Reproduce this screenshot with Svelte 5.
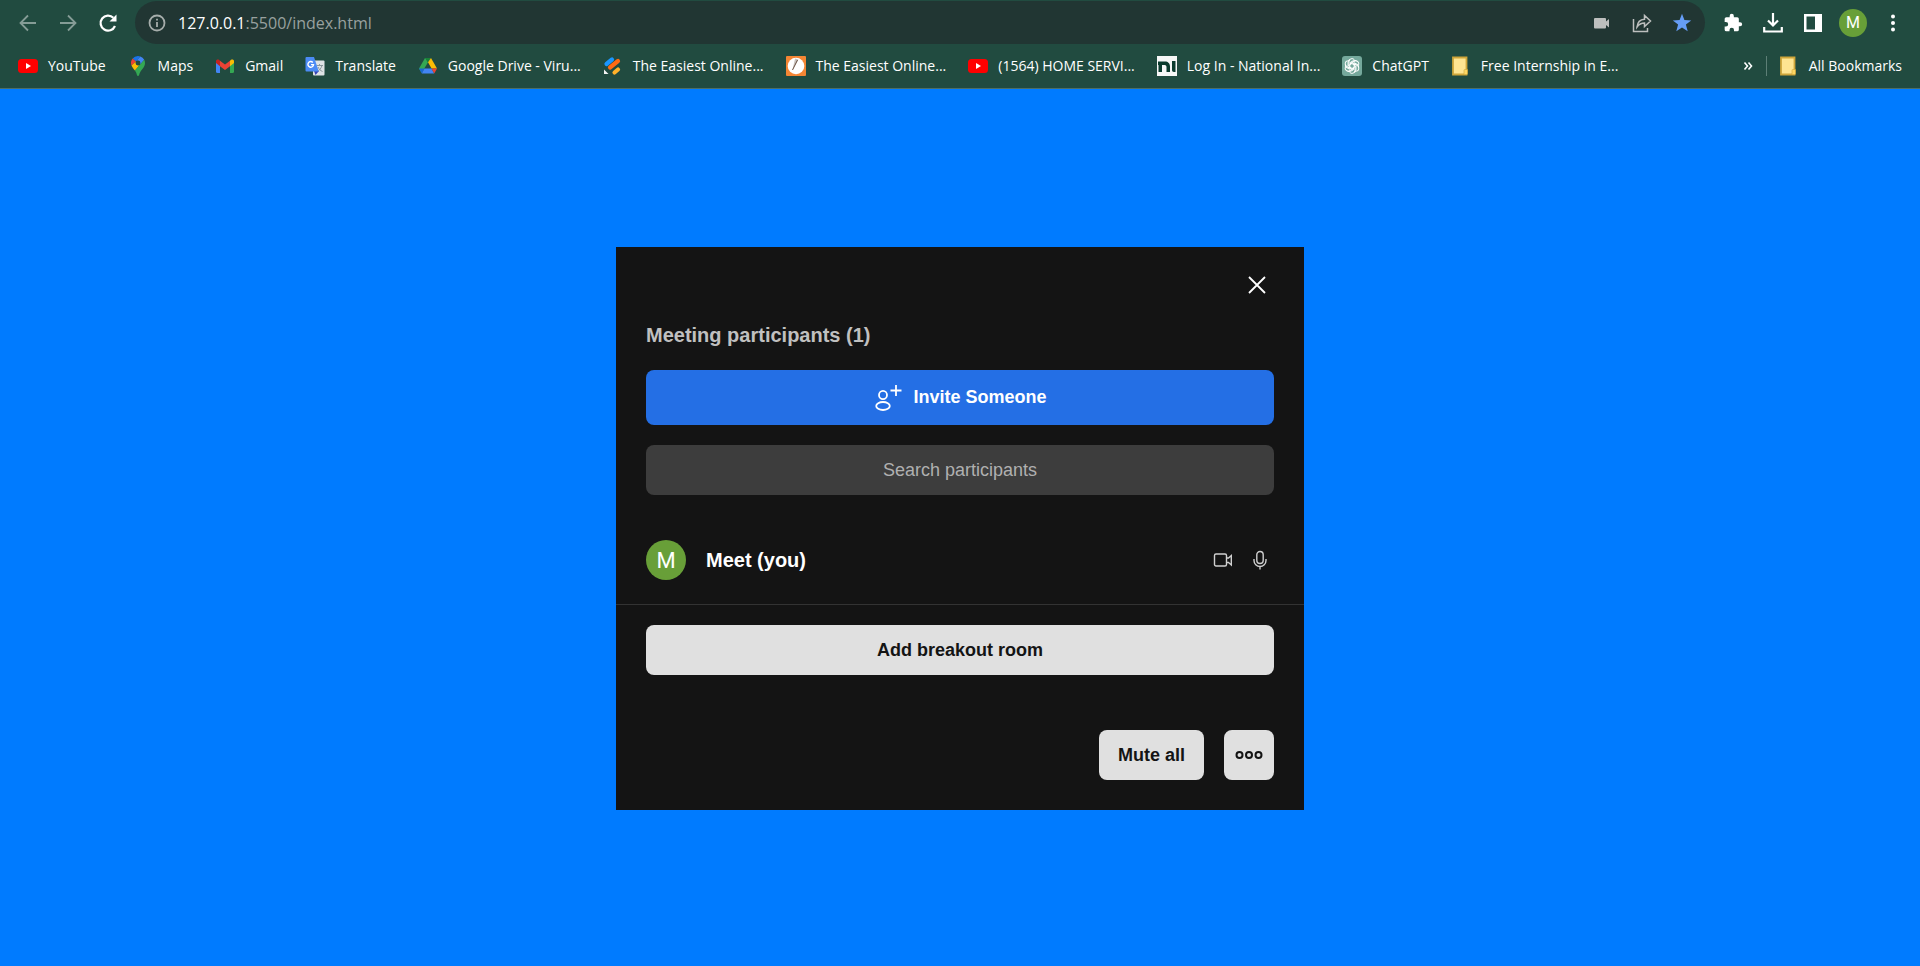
<script>
  const bookmarks = [
    { icon: 'youtube', label: 'YouTube' },
    { icon: 'maps', label: 'Maps' },
    { icon: 'gmail', label: 'Gmail' },
    { icon: 'translate', label: 'Translate' },
    { icon: 'drive', label: 'Google Drive - Viru...' },
    { icon: 'stripes', label: 'The Easiest Online...' },
    { icon: 'pen', label: 'The Easiest Online...' },
    { icon: 'youtube', label: '(1564) HOME SERVI...' },
    { icon: 'ni', label: 'Log In - National In...' },
    { icon: 'chatgpt', label: 'ChatGPT' },
    { icon: 'folder', label: 'Free Internship in E...' }
  ];
  const petals = [0, 60, 120, 180, 240, 300];
</script>

{#snippet favicon(name)}
  <svg class="favicon" viewBox="0 0 20 20" aria-hidden="true">
    {#if name === 'youtube'}
      <rect x="0" y="3" width="20" height="14" rx="3.5" fill="#f00" />
      <path d="M8 7l5 3-5 3z" fill="#fff" />
    {:else if name === 'maps'}
      <path d="M10 0a7 7 0 0 0-5.4 2.5L8 5.400 12.300.4A7 7 0 0 0 10 0z" fill="#1a73e8" />
      <path d="M4.600 2.500A7 7 0 0 0 3.500 9.500L8 5.400z" fill="#ea4335" />
      <path d="M12.300.4 8 5.400a2.700 2.700 0 0 1 4 3.300L16.200 3.800A7 7 0 0 0 12.300.4z" fill="#4285f4" />
      <path d="M8 5.400 3.500 9.500c.8 1.900 2 3.100 3.400 5L12 8.700a2.700 2.700 0 0 1-4-3.300z" fill="#fbbc04" />
      <path d="M16.200 3.800 6.900 14.500c1.200 1.700 1.700 3 2.100 4.700.3 1 1.700 1 2 0 1.200-5.200 6-7.300 6-12.200a7 7 0 0 0-.8-3.200z" fill="#34a853" />
      <circle cx="10" cy="7" r="2.400" fill="#214b40" />
    {:else if name === 'gmail'}
      <path d="M1 6v9.500A1.500 1.500 0 0 0 2.500 17H5V9z" fill="#4285f4" />
      <path d="M19 6v9.500a1.500 1.500 0 0 1-1.500 1.500H15V9z" fill="#34a853" />
      <path d="M1 5v2l4 3.200V4.700L4 3.800C2.800 2.900 1 3.500 1 5z" fill="#c5221f" />
      <path d="M19 5v2l-4 3.200V4.700l1-.9c1.200-.9 3-.3 3 1.200z" fill="#fbbc04" />
      <path d="M5 4.700v5.500l5 3.900 5-3.900V4.700l-5 3.900z" fill="#ea4335" />
    {:else if name === 'translate'}
      <rect x="8" y="4.500" width="11.500" height="15" rx="1" fill="#dfe3e5" />
      <path d="M11.500 9.500h6.500M14.500 8v1.500M17 9.500c-.8 2.800-2.500 4.800-4.500 6M13 11c1 2.200 2.500 3.600 4.500 4.500" fill="none" stroke="#8a979c" stroke-width="1" />
      <path d="M9 15h5l-3.500 4z" fill="#3743b5" />
      <path d="M1.500 1H9l4.800 14.500H1.500A1 1 0 0 1 .5 14.500V2a1 1 0 0 1 1-1z" fill="#4b8bf5" />
      <path d="M7.800 6.500A2.800 2.800 0 1 0 8.500 8.600H6" fill="none" stroke="#fff" stroke-width="1.400" />
    {:else if name === 'drive'}
      <path d="M7 2 1 12.500 3.700 17 10 6.200 7.600 2z" fill="#34a853" />
      <path d="M7 2h6l-3 4.400z" fill="#188038" />
      <path d="M13 2 10 6.300 13.500 12.500H19z" fill="#fbbc04" />
      <path d="M1 12.500h5.500L3.800 17.400z" fill="#1967d2" />
      <path d="M6.500 12.500h7l2.700 5H3.800z" fill="#4285f4" />
      <path d="M13.500 12.500H19l-2.800 5z" fill="#ea4335" />
    {:else if name === 'stripes'}
      <g stroke-width="4.200" stroke-linecap="round">
        <path d="M3.500 8l5.500-4.500" stroke="#1b96ff" />
        <path d="M7 11.500l8-6.500" stroke="#ff6a13" />
        <path d="M11.500 16.500l3.500-3" stroke="#ffb12a" />
      </g>
      <path d="M1 18v-4.500L5.500 18z" fill="#f4f4f4" />
    {:else if name === 'pen'}
      <rect width="20" height="20" rx="1" fill="#f58634" />
      <circle cx="10" cy="10" r="8.300" fill="#fff" />
      <path d="M9 2.500 6.500 14l6-10.500" fill="#c9c3bf" />
      <path d="M11.500 4 6.500 14" stroke="#6c5244" stroke-width="1" />
    {:else if name === 'ni'}
      <rect width="20" height="20" fill="#f7f7f7" />
      <path d="M1 5.500h7c3 0 5 2 5 5V16h-3.500v-5c0-1.300-.7-2-1.800-2H5v7H1.500V9H1zM15 5h3.500v11H17c-1.300 0-2-.8-2-2z" fill="#0b3b2e" />
    {:else if name === 'chatgpt'}
      <rect width="20" height="20" rx="3" fill="#75a99c" />
      <g fill="none" stroke="#fff" stroke-width="1" stroke-linejoin="round">
        {#each petals as angle}
          <path d="M10 7.500 7 9.200V5.600a3 3 0 0 1 5.400-1.800" transform="rotate({angle} 10 10)" />
          <path d="M8.500 8.300V6.300L11.300 4.700a3 3 0 0 1 3.300.3" transform="rotate({angle} 10 10)" />
        {/each}
      </g>
    {:else}
      <path d="M2 1.500h13.500v17H2z" fill="#ffe591" stroke="#cfa63a" />
      <path d="M13 18.500v-4.200a.8.8 0 0 1 .8-.8h2.700v4.200a.8.800 0 0 1-.8.800z" fill="#fdd663" stroke="#cfa63a" stroke-width=".6" />
    {/if}
  </svg>
{/snippet}

<div class="window">
  <header>
    <div class="toolbar">
      <nav class="history" aria-label="History">
        <button class="dim" aria-label="Back">
          <svg width="20" height="20" viewBox="0 0 20 20"><path d="M18 10H2.500M10 2.500 2.500 10l7.500 7.500" /></svg>
        </button>
        <button class="dim" aria-label="Forward">
          <svg width="20" height="20" viewBox="0 0 20 20"><path d="M2 10h15.500M10 2.500l7.500 7.500-7.500 7.500" /></svg>
        </button>
        <button aria-label="Reload">
          <svg width="20" height="20" viewBox="0 0 20 20"><path d="M17 13a7.500 7.500 0 1 1-1.600-8.200" stroke-width="2.200" /><path d="M18.500 1.500v7h-7z" fill="#fff" stroke="none" /></svg>
        </button>
      </nav>
      <div class="omnibox">
        <svg class="info" width="18" height="18" viewBox="0 0 18 18" aria-hidden="true">
          <circle cx="9" cy="9" r="7.500" /><path d="M9 8v5M9 4.800v1.800" />
        </svg>
        <a class="address" href="#top"><span>127.0.0.1</span>:5500/index.html</a>
        <button class="gray" aria-label="Camera in use">
          <svg width="20" height="20" viewBox="0 0 20 20"><path d="M3 5h10a1 1 0 0 1 1 1v2.500L17 6v8.500L14 12v2.500a1 1 0 0 1-1 1H3a1 1 0 0 1-1-1V6a1 1 0 0 1 1-1z" fill="#bdbfbe" stroke="none" /></svg>
        </button>
        <button class="gray" aria-label="Share this page">
          <svg width="20" height="20" viewBox="0 0 20 20"><path d="M1.500 6v12.500h14V15M5 14c.5-5 3-7.500 7.500-7.800V2.500L18.500 8l-6 5.500v-3.500C9 10 7 11.200 5 14z" stroke-width="1.500" /></svg>
        </button>
        <button aria-label="Edit bookmark">
          <svg width="20" height="20" viewBox="0 0 20 20"><path d="M10 .8l2.400 6.300 6.800.3-5.300 4.200 1.800 6.600L10 14.500l-5.700 3.700 1.800-6.600L.8 7.400l6.800-.3z" fill="#669df6" stroke="none" /></svg>
        </button>
      </div>
      <div class="actions">
        <button aria-label="Extensions">
          <svg width="20" height="20" viewBox="0 0 24 24"><path d="M20.500 11H19V7a2 2 0 0 0-2-2h-4V3.500a2.500 2.500 0 0 0-5 0V5H4a2 2 0 0 0-2 2v3.800h1.500a2.700 2.700 0 0 1 0 5.400H2V20a2 2 0 0 0 2 2h3.800v-1.500a2.700 2.700 0 0 1 5.400 0V22H17a2 2 0 0 0 2-2v-4h1.500a2.500 2.500 0 0 0 0-5z" fill="#fff" stroke="none" /></svg>
        </button>
        <button aria-label="Downloads">
          <svg width="20" height="20" viewBox="0 0 20 20"><path d="M10 0v12M5 7.500l5 5 5-5M1.200 14v4.500h17.600V14" stroke-width="2.200" /></svg>
        </button>
        <button aria-label="Side panel">
          <svg width="20" height="20" viewBox="0 0 20 20"><path d="M1 1h18v18H1zM3.500 3.500v13H12v-13z" fill="#fff" fill-rule="evenodd" stroke="none" /></svg>
        </button>
        <button class="profile" aria-label="Profile">M</button>
        <button class="menu" aria-label="Menu">
          <svg width="20" height="20" viewBox="0 0 20 20"><g fill="#fff" stroke="none"><circle cx="10" cy="3.500" r="2" /><circle cx="10" cy="10" r="2" /><circle cx="10" cy="16.500" r="2" /></g></svg>
        </button>
      </div>
    </div>
    <nav class="bookmarks" aria-label="Bookmarks">
      {#each bookmarks as bookmark}
        <a href="#top">{@render favicon(bookmark.icon)}{bookmark.label}</a>
      {/each}
      <button class="overflow" aria-label="More bookmarks">
        <svg width="10" height="10" viewBox="0 0 10 10"><path d="M1.500 1.500 4.500 5 1.500 8.500M5.500 1.500 8.500 5 5.500 8.500" stroke-width="1.600" /></svg>
      </button>
      <a class="all" href="#top">{@render favicon('folder')}All Bookmarks</a>
    </nav>
  </header>

  <main>
    <section class="panel" aria-labelledby="panel-title">
      <button class="close" aria-label="Close">
        <svg width="20" height="20" viewBox="0 0 20 20"><path d="M2 2l16 16M18 2 2 18" stroke-width="1.800" /></svg>
      </button>
      <h1 id="panel-title">Meeting participants (1)</h1>
      <button class="wide invite">
        <svg width="30" height="30" viewBox="0 0 30 30" aria-hidden="true"><ellipse cx="10" cy="12" rx="4" ry="4.200" /><ellipse cx="10" cy="23" rx="6.800" ry="4" /><path d="M23 2v11M17.500 7.500h11" /></svg>
        Invite Someone
      </button>
      <input class="wide search" type="text" aria-label="Search participants" placeholder="Search participants" />
      <div class="participant">
        <span class="avatar">M</span>
        <h2>Meet (you)</h2>
        <div class="devices">
          <button aria-label="Camera">
            <svg width="20" height="20" viewBox="0 0 20 20"><rect x="1.500" y="4" width="12" height="12" rx="1.500" /><path d="M13.500 8 15.500 8 18.300 5.500v9.500l-2.800-2.500h-2" /></svg>
          </button>
          <button aria-label="Microphone">
            <svg width="20" height="20" viewBox="0 0 20 20"><rect x="6.800" y="1.500" width="6.400" height="12" rx="3.200" /><path d="M4 9v1.500a6 6 0 0 0 12 0V9M10 16.500v3" /></svg>
          </button>
        </div>
      </div>
      <hr />
      <button class="wide">Add breakout room</button>
      <div class="footer">
        <button class="mute">Mute all</button>
        <button class="more" aria-label="More options">
          <svg width="30" height="10" viewBox="0 0 30 10"><circle cx="5.500" cy="5" r="3" /><circle cx="15" cy="5" r="3" /><circle cx="24.500" cy="5" r="3" /></svg>
        </button>
      </div>
    </section>
  </main>
</div>

<style>
  :global(body) {
    margin: 0;
    background: #007bff;
  }
  .window {
    display: flex;
    flex-direction: column;
    min-height: 100vh;
    font-family: "Liberation Sans", Arial, sans-serif;
  }
  button {
    display: flex;
    align-items: center;
    justify-content: center;
    padding: 0;
    border: 0;
    background: none;
    font: inherit;
    color: inherit;
    cursor: pointer;
  }
  a {
    color: inherit;
    text-decoration: none;
  }
  svg {
    flex: none;
    fill: none;
    stroke: #fff;
    stroke-width: 1.8;
  }
  .favicon {
    width: 20px;
    height: 20px;
    stroke: none;
  }

  header {
    background: #214b40;
    border-bottom: 1px solid #4d6f66;
    color: #fff;
    font-family: "Open Sans", "Noto Sans", sans-serif;
  }
  .toolbar {
    display: flex;
    align-items: center;
    padding: 1px 17px 0 18px;
  }
  .history,
  .actions {
    display: flex;
    align-items: center;
    gap: 20px;
  }
  .history {
    margin-right: 17px;
  }
  .dim {
    opacity: 0.45;
  }
  .omnibox {
    flex: 1;
    display: flex;
    align-items: center;
    gap: 20px;
    height: 43px;
    padding: 0 13px;
    border-radius: 22px;
    background: #213633;
    margin-right: 18px;
  }
  .info {
    stroke: #a6adab;
    margin-right: -8px;
  }
  .address {
    flex: 1;
    font-size: 16px;
    line-height: 24px;
    color: #98a19f;
  }
  .address span {
    color: #fff;
  }
  .gray svg {
    stroke: #bdbfbe;
  }
  .profile {
    width: 28px;
    height: 28px;
    margin: 0 -4px;
    border-radius: 50%;
    background: #689f38;
    font: 16px Roboto, sans-serif;
  }
  .bookmarks {
    display: flex;
    align-items: center;
    gap: 22px;
    height: 43px;
    padding: 0 18px 1px;
    font-size: 14px;
    line-height: 20px;
    white-space: nowrap;
  }
  .bookmarks a {
    display: flex;
    align-items: center;
    gap: 10px;
  }
  .overflow {
    margin-left: auto;
    margin-right: -9px;
  }
  .bookmarks .all {
    padding-left: 12px;
    border-left: 1px solid #5d7f76;
  }

  main {
    flex: 1;
    display: flex;
    align-items: center;
    justify-content: center;
    padding-top: 2px;
  }
  .panel {
    box-sizing: border-box;
    width: 100%;
    max-width: 688px;
    padding: 20px 30px 30px;
    background: #141414;
    color: #fff;
  }
  .close {
    width: 35px;
    height: 35px;
    margin-left: auto;
  }
  h1,
  h2 {
    margin: 0;
    font-size: 20px;
    line-height: 24px;
    font-weight: 700;
  }
  h1 {
    margin: 21px 0 23px;
    color: #c0c0c0;
  }
  .wide,
  .mute,
  .more {
    box-sizing: border-box;
    height: 50px;
    border-radius: 8px;
    background: #e0e0e0;
    color: #141414;
    font-size: 18px;
    font-weight: 700;
  }
  .wide {
    width: 100%;
  }
  .invite {
    height: 55px;
    gap: 10px;
    background: #246fe5;
    color: #fff;
  }
  .search {
    display: block;
    margin: 20px 0 45px;
    padding: 0 16px;
    border: 0;
    background: #3d3d3d;
    color: #fff;
    font-family: inherit;
    font-weight: 400;
    text-align: center;
  }
  .search::placeholder {
    color: #b0b0b0;
    opacity: 1;
  }
  .participant {
    display: flex;
    align-items: center;
    gap: 20px;
    padding-right: 4px;
  }
  .participant h2 {
    flex: 1;
  }
  .devices {
    display: flex;
    gap: 17px;
  }
  .devices svg {
    stroke: #d0d0d0;
    stroke-width: 1.4;
  }
  .avatar {
    width: 40px;
    height: 40px;
    border-radius: 50%;
    background: #689f38;
    font: 22px/42px Roboto, sans-serif;
    text-align: center;
  }
  hr {
    height: 1px;
    margin: 24px -30px 20px;
    border: 0;
    background: #333;
  }
  .footer {
    display: flex;
    justify-content: flex-end;
    gap: 20px;
    margin-top: 55px;
  }
  .mute {
    padding: 0 19px;
  }
  .more {
    width: 50px;
  }
  .more svg {
    stroke: #141414;
    stroke-width: 2;
  }
</style>
